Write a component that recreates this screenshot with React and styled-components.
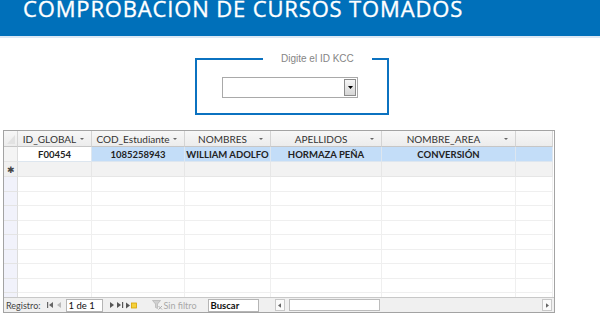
import React from 'react'
import styled, { createGlobalStyle } from 'styled-components'

const GlobalStyle = createGlobalStyle`
  html, body { margin: 0; padding: 0; background: #fff; }
  body { font-family: Lato, "Liberation Sans", sans-serif; }
`

const COLS = '14px 74px 93px 86px 111px 134px 37px'

const columns = ['ID_GLOBAL', 'COD_Estudiante', 'NOMBRES', 'APELLIDOS', 'NOMBRE_AREA']
const record = ['F00454', '1085258943', 'WILLIAM ADOLFO', 'HORMAZA PEÑA', 'CONVERSIÓN']

const Banner = styled.header`
  height: 36px;
  background: #0070ba;
  border-bottom: 2px solid #dbe8f5;
  padding-left: 23px;
  overflow: hidden;
`

const Title = styled.h1`
  margin: -3px 0 0;
  font-family: "Open Sans", sans-serif;
  font-weight: 400;
  font-size: 22px;
  line-height: 22px;
  letter-spacing: 0.85px;
  color: #fff;
  -webkit-text-stroke: 0.35px #fff;
  white-space: nowrap;
`

const Filter = styled.fieldset`
  box-sizing: border-box;
  width: 194px;
  margin: 15px 0 0 195px;
  padding: 0 0 15px 25px;
  border: 2px solid #0b72c0;
`

const Caption = styled.legend`
  margin-left: 41px;
  padding: 0 18px;
  font-family: "Liberation Sans", Arial, sans-serif;
  font-size: 10px;
  line-height: 12px;
  color: #858585;
`

const Combo = styled.div`
  margin-top: 12px;
  box-sizing: border-box;
  width: 136px;
  height: 21px;
  border: 1px solid #a9a9a9;
  background: #fff;
  display: flex;
  justify-content: flex-end;
  padding: 1px;
`

const ComboButton = styled.div`
  box-sizing: border-box;
  width: 12px;
  height: 17px;
  border: 1px solid #8c8c8c;
  background: linear-gradient(#f6f6f6, #d6d6d6);
  display: flex;
  align-items: center;
  justify-content: center;
`

const Sheet = styled.div`
  box-sizing: border-box;
  width: 552px;
  height: 183px;
  margin: 15px 0 0 3px;
  border: 1px solid #a3a3a3;
  display: flex;
  flex-direction: column;
`

const Grid = styled.div`
  flex: 1;
  overflow: hidden;
  display: flex;
  flex-direction: column;
`

const Row = styled.div`
  display: grid;
  grid-template-columns: ${COLS};
  height: ${p => p.$h}px;
  flex: none;
`

const HeadCell = styled.div`
  box-sizing: border-box;
  background: linear-gradient(#f7f7f7, #ececec);
  border-right: 1px solid #d4d4d4;
  border-bottom: 1px solid #c6c6c6;
  display: flex;
  align-items: center;
  justify-content: center;
  position: relative;
  font-size: 10px;
  color: #333;
  white-space: nowrap;
`

const HeadText = styled.span`
  margin-right: 10px;
`

const Arrow = styled.span`
  position: absolute;
  right: 7px;
  top: 7px;
  width: 0;
  height: 0;
  border-left: 2px solid transparent;
  border-right: 2px solid transparent;
  border-top: 2px solid #666;
`

const Selector = styled.div`
  box-sizing: border-box;
  background: ${p => p.$bg || '#f1f2fb'};
  border-right: 1px solid #dcdcdc;
  border-bottom: 1px solid #e4e4e4;
  display: flex;
  align-items: center;
  justify-content: center;
  font-size: 9px;
  color: #444;
`

const Cell = styled.div`
  box-sizing: border-box;
  background: ${p => p.$bg || '#fff'};
  border-right: 1px solid ${p => p.$line || '#efefef'};
  border-bottom: 1px solid ${p => p.$line || '#efefef'};
  display: flex;
  align-items: center;
  justify-content: center;
  font-size: 9.5px;
  font-weight: 700;
  color: #222;
  white-space: nowrap;
`

const Nav = styled.div`
  height: 14px;
  flex: none;
  border-top: 1px solid #c8c8c8;
  background: #f0f0f0;
  display: flex;
  align-items: center;
  font-size: 9px;
  color: #444;
  white-space: nowrap;
`

const NavLabel = styled.span`
  margin-left: ${p => p.$gap || 0}px;
  color: ${p => p.$dim ? '#a8a8a8' : '#444'};
`

const NavBtn = styled.span`
  display: inline-flex;
  align-items: center;
  justify-content: center;
  margin-left: ${p => p.$gap || 0}px;
`

const NavInput = styled.span`
  box-sizing: border-box;
  height: 13px;
  width: ${p => p.$w}px;
  margin-left: ${p => p.$gap}px;
  background: #fff;
  border: 1px solid #b5b5b5;
  padding-left: 2px;
  font-weight: ${p => p.$bold ? 700 : 400};
  color: #111;
  font-size: 9.5px;
  line-height: 11px;
`

const Scroll = styled.div`
  margin-left: 16px;
  flex: 1;
  height: 12px;
  display: flex;
  align-items: center;
  background: #f0f0f0;
  margin-right: 2px;
`

const ScrollBtn = styled.span`
  box-sizing: border-box;
  width: 10px;
  height: 12px;
  border: 1px solid #c8c8c8;
  background: #fafafa;
  display: flex;
  align-items: center;
  justify-content: center;
`

const Thumb = styled.span`
  box-sizing: border-box;
  width: 91px;
  height: 12px;
  margin-left: 4px;
  border: 1px solid #bcbcbc;
  background: #fff;
`

const Track = styled.span`
  flex: 1;
`

const Tri = ({ dir = 'right', color = '#555', size = 4 }) => (
  <svg width={size} height={size + 2} viewBox="0 0 4 6">
    {dir === 'right'
      ? <path d="M0 0 L4 3 L0 6 Z" fill={color} />
      : <path d="M4 0 L0 3 L4 6 Z" fill={color} />}
  </svg>
)

const First = ({ color }) => (
  <svg width="7" height="6" viewBox="0 0 7 6">
    <rect x="0" y="0" width="1.2" height="6" fill={color} />
    <path d="M6 0 L2 3 L6 6 Z" fill={color} />
  </svg>
)

const Last = ({ color }) => (
  <svg width="7" height="6" viewBox="0 0 7 6">
    <path d="M0 0 L4 3 L0 6 Z" fill={color} />
    <rect x="5" y="0" width="1.2" height="6" fill={color} />
  </svg>
)

const NewRec = () => (
  <svg width="11" height="7" viewBox="0 0 11 7">
    <path d="M0 0.5 L4 3.5 L0 6.5 Z" fill="#555" />
    <rect x="5.5" y="1" width="5" height="5" fill="#f5d13c" stroke="#d8a200" strokeWidth="0.8" />
  </svg>
)

const FunnelOff = () => (
  <svg width="11" height="10" viewBox="0 0 11 10">
    <path d="M0.5 0.5 H8.5 L5.5 4 V8.5 L3.5 7.5 V4 Z" fill="#d0d0d0" stroke="#aaa" strokeWidth="0.6" />
    <path d="M6.5 6 L10 9.5 M10 6 L6.5 9.5" stroke="#b0b0b0" strokeWidth="1" />
  </svg>
)

const Corner = () => (
  <svg width="13" height="15" viewBox="0 0 13 15">
    <path d="M3 13 L11 4 L11 13 Z" fill="#e2e2e2" />
  </svg>
)

export default function App() {
  const empties = Array.from({ length: 9 })
  return (
    <>
      <GlobalStyle />
      <Banner>
        <Title>COMPROBACIÓN DE CURSOS TOMADOS</Title>
      </Banner>

      <Filter>
        <Caption>Digite el ID KCC</Caption>
        <Combo>
          <ComboButton>
            <svg width="5" height="3" viewBox="0 0 5 3"><path d="M0 0 H5 L2.5 3 Z" fill="#000" /></svg>
          </ComboButton>
        </Combo>
      </Filter>

      <Sheet>
        <Grid>
          <Row $h={16}>
            <HeadCell><Corner /></HeadCell>
            {columns.map(c => (
              <HeadCell key={c}>
                <HeadText>{c}</HeadText>
                <Arrow />
              </HeadCell>
            ))}
            <HeadCell />
          </Row>
          <Row $h={15}>
            <Selector $bg="#f4f4f4" />
            {record.map((v, i) => (
              <Cell key={i} $bg={i === 0 ? '#fff' : '#c3ddf8'} $line="#dde6ef">{v}</Cell>
            ))}
            <Cell $bg="#c3ddf8" $line="#dde6ef" />
          </Row>
          <Row $h={15}>
            <Selector $bg="#f0f0f0">✱</Selector>
            {record.map((_, i) => <Cell key={i} $bg="#f2f2f2" $line="#e6e6e6" />)}
            <Cell $bg="#f2f2f2" $line="#e6e6e6" />
          </Row>
          {empties.map((_, r) => (
            <Row $h={14.5} key={r}>
              <Selector />
              {record.map((_, i) => <Cell key={i} />)}
              <Cell />
            </Row>
          ))}
        </Grid>

        <Nav>
          <NavLabel $gap={2}>Registro:</NavLabel>
          <NavBtn $gap={6}><First color="#666" /></NavBtn>
          <NavBtn $gap={3}><Tri dir="left" color="#b8b8b8" /></NavBtn>
          <NavInput $w={37} $gap={5}>1 de 1</NavInput>
          <NavBtn $gap={7}><Tri color="#555" /></NavBtn>
          <NavBtn $gap={3}><Last color="#555" /></NavBtn>
          <NavBtn $gap={2}><NewRec /></NavBtn>
          <NavBtn $gap={15}><FunnelOff /></NavBtn>
          <NavLabel $gap={1} $dim>Sin filtro</NavLabel>
          <NavInput $bold $w={51} $gap={11}>Buscar</NavInput>
          <Scroll>
            <ScrollBtn><Tri dir="left" color="#666" size={3} /></ScrollBtn>
            <Thumb />
            <Track />
            <ScrollBtn><Tri color="#666" size={3} /></ScrollBtn>
          </Scroll>
        </Nav>
      </Sheet>
    </>
  )
}
